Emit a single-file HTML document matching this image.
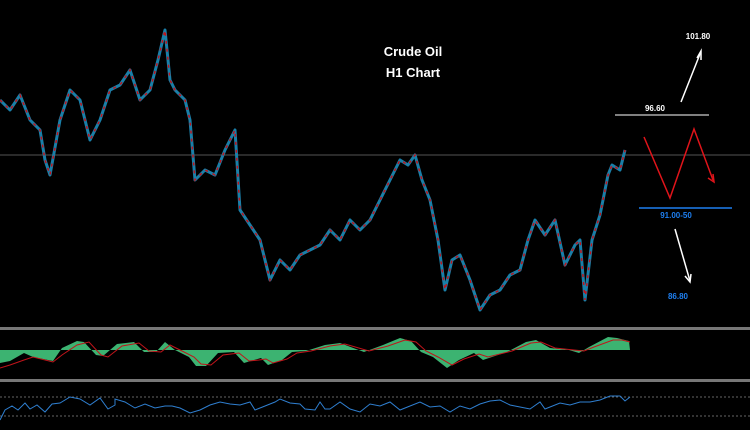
<!DOCTYPE html>
<html><head><meta charset="utf-8"><style>
html,body{margin:0;padding:0;background:#000;width:750px;height:430px;overflow:hidden}
svg{display:block}
text{font-family:"Liberation Sans",sans-serif;font-weight:bold}
</style></head><body>
<svg width="750" height="430" viewBox="0 0 750 430">
<rect width="750" height="430" fill="#000"/>
<line x1="0" y1="155" x2="750" y2="155" stroke="#555" stroke-width="1"/>
<polyline fill="none" stroke="#1a7fa8" stroke-width="3" stroke-linejoin="round" points="0,100 10,110 20,95 30,120 40,130 45,160 50,175 60,120 70,90 80,100 90,140 100,120 110,90 120,85 130,70 140,100 150,90 158,60 165,30 170,80 175,90 185,100 190,120 195,180 205,170 215,175 225,150 235,130 240,210 250,225 260,240 270,280 280,260 290,270 300,255 310,250 320,245 330,230 340,240 350,220 360,230 370,220 380,200 390,180 400,160 408,165 415,155 422,180 430,200 438,240 445,290 452,260 460,255 470,280 480,310 490,295 500,290 510,275 520,270 528,240 535,220 545,235 555,220 565,265 575,245 580,240 585,300 592,240 600,215 608,175 612,165 620,170 625,150"/>
<polyline fill="none" stroke="#c0141a" stroke-width="1.5" stroke-dasharray="3 5" points="0,100 10,110 20,95 30,120 40,130 45,160 50,175 60,120 70,90 80,100 90,140 100,120 110,90 120,85 130,70 140,100 150,90 158,60 165,30 170,80 175,90 185,100 190,120 195,180 205,170 215,175 225,150 235,130 240,210 250,225 260,240 270,280 280,260 290,270 300,255 310,250 320,245 330,230 340,240 350,220 360,230 370,220 380,200 390,180 400,160 408,165 415,155 422,180 430,200 438,240 445,290 452,260 460,255 470,280 480,310 490,295 500,290 510,275 520,270 528,240 535,220 545,235 555,220 565,265 575,245 580,240 585,300 592,240 600,215 608,175 612,165 620,170 625,150"/>
<text x="413" y="56" fill="#fff" font-size="13" text-anchor="middle">Crude Oil</text>
<text x="413" y="77" fill="#fff" font-size="13" text-anchor="middle">H1 Chart</text>
<text x="698" y="39" fill="#fff" font-size="8" text-anchor="middle">101.80</text>
<line x1="681" y1="102" x2="700" y2="54" stroke="#fff" stroke-width="1.5"/>
<polyline points="697,58 701,51 701,60" fill="none" stroke="#fff" stroke-width="1.5"/>
<text x="655" y="111" fill="#fff" font-size="8" text-anchor="middle">96.60</text>
<line x1="615" y1="115" x2="709" y2="115" stroke="#fff" stroke-width="1"/>
<polyline points="644,137 670,198 694,129 713,180" fill="none" stroke="#e0141a" stroke-width="1.5"/>
<polyline points="708,178 714,182 713,174" fill="none" stroke="#e0141a" stroke-width="1.5"/>
<line x1="639" y1="208" x2="732" y2="208" stroke="#1e7ff0" stroke-width="1.5"/>
<text x="676" y="218" fill="#1e7ff0" font-size="8" text-anchor="middle">91.00-50</text>
<line x1="675" y1="229" x2="690" y2="281" stroke="#fff" stroke-width="1.5"/>
<polyline points="685,276 690,282 691,274" fill="none" stroke="#fff" stroke-width="1.5"/>
<text x="678" y="299" fill="#1e7ff0" font-size="8" text-anchor="middle">86.80</text>
<rect x="0" y="327" width="750" height="3" fill="#777"/>
<rect x="0" y="379" width="750" height="3" fill="#777"/>
<polygon fill="#3cb371" points="0,350 0,363 10,361 24,353 33,357 53,361 62,348 77,341 84,342 96,355 103,356 117,344 134,342 144,352 156,352 165,342 175,350 189,357 196,366 206,366 218,353 234,352 244,363 254,360 261,358 268,365 282,360 292,352 306,351 325,345 340,343 364,352 383,345 400,338 411,341 421,352 433,357 447,368 459,360 474,353 483,360 507,352 526,342 536,340 550,348 569,350 579,353 589,347 608,337 617,338 629,341 630,350"/>
<polyline fill="none" stroke="#c0141a" stroke-width="1" points="0,368 10,365 24,360 33,357 53,362 62,355 77,345 89,342 101,355 108,357 122,346 139,343 149,351 161,352 170,345 180,350 194,357 201,364 211,365 223,355 239,353 249,361 259,360 266,359 273,363 287,359 297,353 311,351 330,346 345,344 369,351 388,346 405,340 416,342 426,351 438,357 452,365 464,359 479,354 488,357 512,351 531,343 541,342 555,348 574,350 584,351 594,347 613,340 622,340 630,342"/>
<line x1="0" y1="397" x2="750" y2="397" stroke="#666" stroke-width="1" stroke-dasharray="2 2"/>
<line x1="0" y1="416" x2="750" y2="416" stroke="#666" stroke-width="1" stroke-dasharray="2 2"/>
<polyline fill="none" stroke="#2f7fd0" stroke-width="1" points="0,420 5,410 12,406 18,410 25,403 30,409 37,405 45,412 52,404 60,403 70,397 80,399 90,405 100,398 108,409 115,405 115,399 125,402 135,408 145,404 155,408 165,406 172,406 180,408 190,413 200,410 210,405 220,402 230,404 240,405 250,402 255,410 260,408 275,402 280,399 290,403 300,404 305,409 315,410 320,402 325,409 330,409 340,402 350,409 360,412 370,404 380,406 390,402 400,410 410,406 420,402 430,407 440,406 450,412 460,406 470,409 480,404 490,401 500,400 510,405 520,407 530,409 540,402 545,409 550,407 560,403 570,405 580,402 590,402 600,400 605,398 610,396 620,396 625,401 630,397"/>
</svg>
</body></html>
